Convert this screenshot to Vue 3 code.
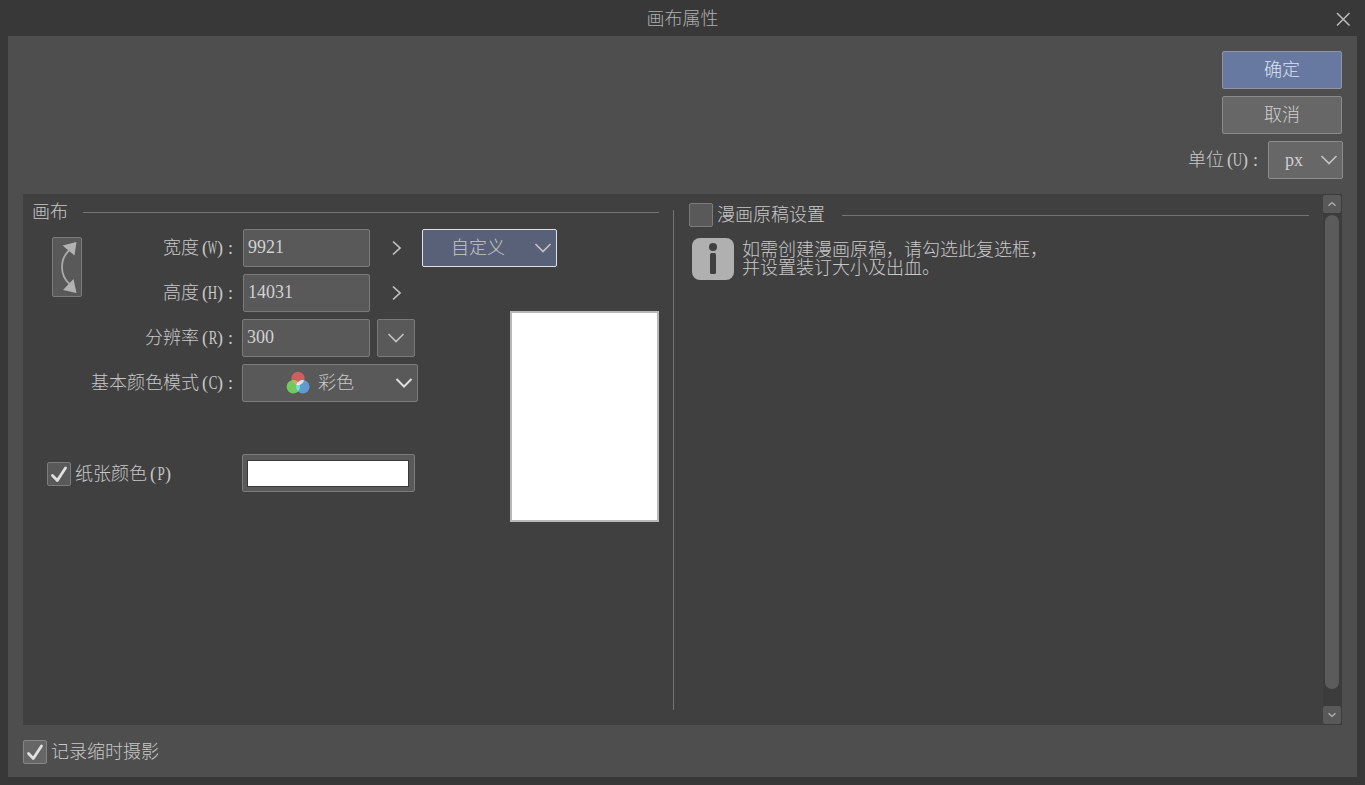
<script setup>
import { h, ref } from 'vue'

// Half-width text: every Latin character takes exactly half an em.
const Cells = (props) =>
  h('span', { class: 'cells' }, [...props.t].map((c) =>
    h('span', { class: ['cell', { cap: /[A-Z]/.test(c), wide: c === 'W', open: c === '(', close: c === ')' }] }, [h('i', c)])
  ))
Cells.props = ['t']

const width = ref('9921')
const height = ref('14031')
const resolution = ref('300')
</script>

<template>
  <div class="window">
    <header class="titlebar">
      <h1>画布属性</h1>
      <svg class="close-icon" width="16" height="16" viewBox="0 0 16 16"><path d="M2 2L14.500 14.500M14.500 2L2 14.500" /></svg>
    </header>

    <main class="body">
      <div class="actions">
        <button class="btn primary">确定</button>
        <button class="btn">取消</button>
        <div class="unit">
          <label>单位<Cells t="(U):" /></label>
          <button class="btn px"><span class="pxtext">px</span><svg class="chev" width="18" height="12" viewBox="0 0 18 12"><path d="M1.5 2L9 9.5L16.5 2" /></svg></button>
        </div>
      </div>

      <div class="panel">
        <section class="canvas">
          <div class="heading"><span>画布</span><hr /></div>
          <div class="content">
            <button class="swap">
              <svg width="28" height="58" viewBox="0 0 28 58">
                <path class="arc" d="M16.500 12C6.500 21 6.500 37 16.500 46" />
                <path class="tip" d="M23.500 4L9.500 7.500L21.500 17.500ZM23.500 55L10 52L20.500 41Z" />
              </svg>
            </button>
            <div class="form">
              <div class="row">
                <label>宽度<Cells t="(W):" /></label>
                <div class="field inset">{{ width }}</div>
                <svg class="more" width="10" height="16" viewBox="0 0 10 16"><path d="M1 1.500L8 8L1 14.500" /></svg>
              </div>
              <div class="row">
                <label>高度<Cells t="(H):" /></label>
                <div class="field inset">{{ height }}</div>
                <svg class="more" width="10" height="16" viewBox="0 0 10 16"><path d="M1 1.500L8 8L1 14.500" /></svg>
              </div>
              <div class="row">
                <label>分辨率<Cells t="(R):" /></label>
                <div class="field">{{ resolution }}</div>
                <button class="drop"><svg class="chev" width="18" height="12" viewBox="0 0 18 12"><path d="M1.500 2L9 9.500L16.500 2" /></svg></button>
              </div>
              <div class="row">
                <label>基本颜色模式<Cells t="(C):" /></label>
                <button class="mode">
                  <svg class="rgb" width="24" height="24" viewBox="0 0 24 24">
                    <circle cx="12" cy="7.500" r="6.700" fill="#cd5f5f" />
                    <circle cx="7.300" cy="15.800" r="6.700" fill="#72ca5e" />
                    <circle cx="16.900" cy="15.800" r="6.700" fill="#5f9bd1" />
                    <path d="M5.900 9.300A6.700 6.700 0 0 1 12 11A6.700 6.700 0 0 0 10.400 14A6.700 6.700 0 0 1 5.900 9.300Z" fill="#dfa262" />
                    <path d="M18.200 9.300A6.700 6.700 0 0 0 10.200 14A6.700 6.700 0 0 0 18.200 9.300Z" fill="#ead5ee" />
                    <path d="M12 11A6.700 6.700 0 0 1 12 20.500A6.700 6.700 0 0 1 12 11Z" fill="#6fe5d3" />
                    <path d="M12 11L13.900 14.100L10.300 14.100Z" fill="#f6f2f2" />
                  </svg>
                  <span>彩色</span>
                  <svg class="chev" width="18" height="12" viewBox="0 0 18 12"><path d="M1.500 2L9 9.500L16.500 2" /></svg>
                </button>
              </div>
            </div>
            <div class="side">
              <button class="preset"><span>自定义</span><svg class="chev" width="18" height="12" viewBox="0 0 18 12"><path d="M1.500 2L9 9.500L16.500 2" /></svg></button>
              <div class="preview"></div>
            </div>
          </div>
          <div class="paper">
            <span class="check"><svg width="22" height="22" viewBox="0 0 22 22"><path d="M4.500 12.500L9.300 17.500L17.500 5" /></svg></span>
            <label>纸张颜色<Cells t="(P)" /></label>
            <div class="swatch"><div></div></div>
          </div>
        </section>

        <div class="divider"></div>

        <section class="manga">
          <div class="heading"><span class="check"></span><span class="name">漫画原稿设置</span><hr /></div>
          <div class="info">
            <svg width="42" height="42" viewBox="0 0 42 42">
              <rect width="42" height="42" rx="8" fill="#b0b0b0" />
              <circle cx="21" cy="9" r="4" fill="#404040" />
              <rect x="18" y="15" width="6" height="21" rx="1.500" fill="#404040" />
            </svg>
            <p>如需创建漫画原稿，请勾选此复选框，<br />并设置装订大小及出血。</p>
          </div>
        </section>

        <aside class="scroll">
          <button><svg width="10" height="6" viewBox="0 0 10 6"><path d="M1.500 4.800L5 1.600L8.500 4.800" /></svg></button>
          <div class="thumb"></div>
          <button><svg width="10" height="6" viewBox="0 0 10 6"><path d="M1.500 1.200L5 4.400L8.500 1.200" /></svg></button>
        </aside>
      </div>

      <footer class="record">
        <span class="check"><svg width="22" height="22" viewBox="0 0 22 22"><path d="M4.500 12.500L9.300 17.500L17.500 5" /></svg></span>
        <label>记录缩时摄影</label>
      </footer>
    </main>
  </div>
</template>

<style>
body { margin: 0; background: #383838; }
.cells { display: inline-flex; }
.cell { display: inline-flex; justify-content: center; width: 9px; font-family: "Liberation Serif", serif; }
.cell i { font-style: normal; }
.cell.cap i { transform: scaleX(0.72); }
.cell.wide i { transform: scaleX(0.55); }
.cell.open { justify-content: flex-end; }
.cell.close { justify-content: flex-start; }
</style>

<style scoped>
* { box-sizing: border-box; }
.window { width: 1365px; height: 785px; background: #383838; color: #c8c8c8; font: 300 18px/18px "Liberation Serif", "Noto Sans CJK SC", serif; padding: 0 8px 8px; display: flex; flex-direction: column; white-space: nowrap; }
button { appearance: none; padding: 0; margin: 0; font: inherit; color: inherit; display: flex; align-items: center; border: 1px solid #7b7b7b; border-radius: 2px; background: #595959; }
svg { display: block; flex: none; }
hr { flex: 1; margin: 0; border: 0; height: 1px; background: #747474; }
.titlebar { height: 36px; padding-top: 1px; display: flex; align-items: center; justify-content: center; flex: none; }
h1 { margin: 0 -22px 0 0; flex: 1; text-align: center; font: inherit; color: #b0b0b0; }
.close-icon { margin-right: 6px; stroke: #bcbcbc; stroke-width: 1.5; }
.body { background: #4e4e4e; flex: 1; padding: 15px 15px 0; display: flex; flex-direction: column; }
.actions { display: flex; flex-direction: column; align-items: flex-end; gap: 7px; }
.btn { width: 120px; height: 38px; justify-content: center; background: #676767; border-color: #8b8b8b; color: #d0d0d0; }
.primary { background: #6879a1; border-color: #9095a1; color: #dae2ee; }
.unit { display: flex; align-items: center; margin-right: -1px; }
.unit label { margin-right: 8px; }
.btn.px { width: 75px; justify-content: space-between; padding: 0 4px 0 16px; }
.chev path, .more path { fill: none; stroke: #c2c2c2; stroke-width: 1.7; }
.panel { background: #404040; height: 531px; margin-top: 15px; display: flex; flex: none; }
.canvas { width: 650px; padding-top: 9px; }
.canvas .heading { height: 18px; display: flex; align-items: center; margin: 0 14px 0 9px; gap: 15px; }
.content { display: flex; margin-top: 8px; height: 293px; }
.swap { width: 30px; height: 60px; margin: 8px 0 0 29px; }
.arc { fill: none; stroke: #aaa; stroke-width: 1.8; }
.tip { fill: #b2b2b2; }
.form { width: 340px; display: flex; flex-direction: column; gap: 7px; }
.row { display: flex; align-items: center; height: 38px; }
.row label { width: 153px; text-align: right; margin-right: 7px; }
.field { width: 128px; height: 38px; border: 1px solid #7b7b7b; border-radius: 2px; background: #595959; padding: 8px 4px; color: #d2d2d2; }
.field.inset { width: 127px; margin-left: 1px; }
.more { margin-left: 22px; }
.drop { width: 38px; height: 38px; justify-content: center; margin-left: 7px; }
.mode { width: 176px; height: 38px; padding: 0 4px 0 43px; }
.mode span { margin-left: 8px; flex: 1; text-align: left; }
.mode .chev path { stroke: #dedede; stroke-width: 2; }
.side { width: 237px; display: flex; flex-direction: column; justify-content: space-between; }
.preset { width: 135px; height: 38px; background: #596178; border-color: #dfe0e5; justify-content: space-between; padding: 0 4px 0 28px; }
.preview { width: 149px; height: 211px; background: #fff; border: 2px solid #b8b8b8; align-self: flex-end; }
.paper { display: flex; align-items: center; margin: -68px 0 0 24px; height: 38px; }
.check { width: 24px; height: 24px; border: 1px solid #7b7b7b; border-radius: 2px; background: #595959; flex: none; }
.check path { fill: none; stroke: #e0e0e0; stroke-width: 2.8; stroke-linecap: round; stroke-linejoin: round; }
.paper .check, .paper label { margin-top: 2px; }
.paper label { width: 167px; margin-left: 4px; }
.swatch { width: 173px; height: 38px; background: #595959; border: 1px solid #7b7b7b; border-radius: 2px; padding: 5px 5px 4px; }
.swatch div { height: 27px; width: 162px; margin-left: -1px; background: #fff; border: 1px solid #393939; }
.divider { width: 1px; height: 500px; background: #747474; margin-top: 16px; }
.manga { width: 649px; padding: 9px 14px 0 15px; }
.manga .heading { height: 24px; display: flex; align-items: center; }
.name { margin: 0 17px 0 4px; }
.info { display: flex; margin: 11px 0 0 3px; }
.info p { margin: 3px 0 0 8px; }
.scroll { width: 19px; background: #3c3c3c; padding: 1px 1px 1px 0; display: flex; flex-direction: column; align-items: center; }
.scroll button { width: 18px; height: 18px; border: 0; justify-content: center; }
.scroll path { fill: none; stroke: #b0b0b0; stroke-width: 1.4; }
.thumb { width: 14px; height: 474px; border-radius: 7px; background: #5b5b5b; margin: 2px 0 17px; }
.record { display: flex; align-items: center; gap: 4px; margin-top: 15px; }
.record .check { background: #666; border-color: #858585; }
</style>
